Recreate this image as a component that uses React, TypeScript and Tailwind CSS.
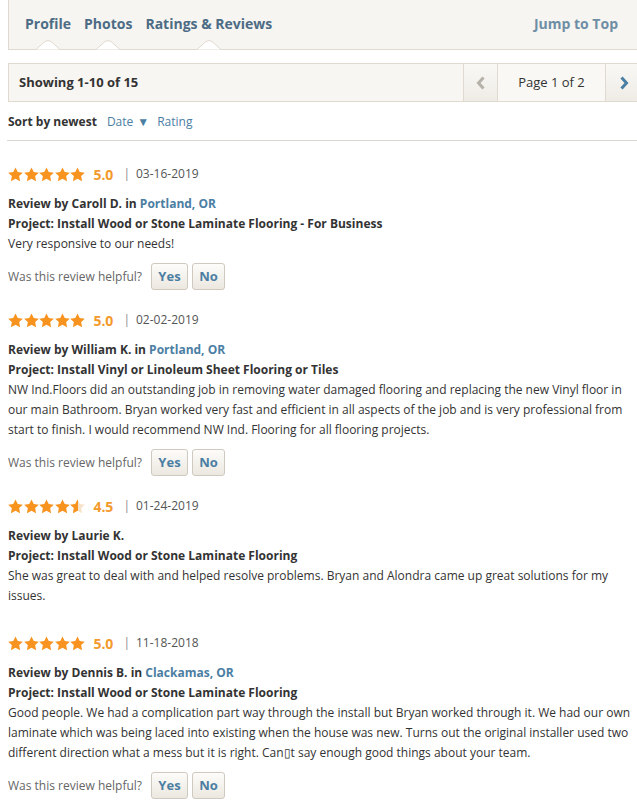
import React from 'react';

const BLUE = 'text-[#4b7ea3]';

type Review = {
  rating: number;
  date: string;
  author: string;
  location?: string;
  project: string;
  body: string[];
  helpful: boolean;
};

const reviews: Review[] = [
  {
    rating: 5,
    date: '03-16-2019',
    author: 'Caroll D.',
    location: 'Portland, OR',
    project: 'Install Wood or Stone Laminate Flooring - For Business',
    body: ['Very responsive to our needs!'],
    helpful: true,
  },
  {
    rating: 5,
    date: '02-02-2019',
    author: 'William K.',
    location: 'Portland, OR',
    project: 'Install Vinyl or Linoleum Sheet Flooring or Tiles',
    body: [
      'NW Ind.Floors did an outstanding job in removing water damaged flooring and replacing the new Vinyl floor in',
      'our main Bathroom. Bryan worked very fast and efficient in all aspects of the job and is very professional from',
      'start to finish. I would recommend NW Ind. Flooring for all flooring projects.',
    ],
    helpful: true,
  },
  {
    rating: 4.5,
    date: '01-24-2019',
    author: 'Laurie K.',
    project: 'Install Wood or Stone Laminate Flooring',
    body: [
      'She was great to deal with and helped resolve problems. Bryan and Alondra came up great solutions for my',
      'issues.',
    ],
    helpful: false,
  },
  {
    rating: 5,
    date: '11-18-2018',
    author: 'Dennis B.',
    location: 'Clackamas, OR',
    project: 'Install Wood or Stone Laminate Flooring',
    body: [
      'Good people. We had a complication part way through the install but Bryan worked through it. We had our own',
      'laminate which was being laced into existing when the house was new. Turns out the original installer used two',
      'different direction what a mess but it is right. Can\u25AFt say enough good things about your team.',
    ],
    helpful: true,
  },
];

const STAR = 'M8 0.4l2.4 4.9 5.4 0.7-3.9 3.7 1 5.4L8 12.5 3.1 15.1l1-5.4L0.2 6l5.4-0.7z';

const Star = ({ half = false, id }: { half?: boolean; id: string }) => (
  <svg width="15" height="15" viewBox="0 0 16 16">
    {half ? (
      <>
        <defs>
          <clipPath id={id}>
            <rect x="0" y="0" width="8.4" height="16" />
          </clipPath>
        </defs>
        <path d={STAR} fill="#f7e3c8" />
        <path d={STAR} fill="#f7931e" clipPath={`url(#${id})`} />
      </>
    ) : (
      <path d={STAR} fill="#f7931e" />
    )}
  </svg>
);

const Stars = ({ rating, idx }: { rating: number; idx: number }) => (
  <div className="flex gap-[0.6px]">
    {[0, 1, 2, 3, 4].map((i) => (
      <Star key={i} id={`half-${idx}-${i}`} half={rating - i > 0 && rating - i < 1} />
    ))}
  </div>
);

const Tab = ({ label }: { label: string }) => (
  <span className="relative flex items-center pb-[3px]">
    {label}
    <svg
      width="24"
      height="10"
      viewBox="0 0 24 10"
      className="absolute bottom-[-1px] left-1/2 -translate-x-1/2"
    >
      <path d="M0 9.5 L9 1.5 Q12 -0.5 15 1.5 L24 9.5" fill="#ffffff" stroke="#e0d9d0" strokeWidth="1" />
    </svg>
  </span>
);

const HelpBtn = ({ label, w }: { label: string; w: string }) => (
  <button
    className={`${w} h-[27px] rounded-[3px] border border-[#cfc9bf] bg-gradient-to-b from-[#fdfcfa] to-[#ece8e0] text-[13px] font-bold ${BLUE} flex items-center justify-center`}
  >
    {label}
  </button>
);

export default function App() {
  return (
    <div
      className="w-[637px] h-[809px] overflow-hidden bg-white text-[#333] text-[12px]"
      style={{ fontFamily: '"Open Sans", "Liberation Sans", sans-serif' }}
    >
      {/* tab bar */}
      <div className="ml-2 h-[50px] w-[640px] bg-[#f7f5f1] border-l border-b border-[#e0d9d0] flex items-stretch pl-4 pr-[30px]">
        <div className="flex items-stretch gap-[13px] text-[14px] font-bold text-[#4c6c85]">
          <Tab label="Profile" />
          <Tab label="Photos" />
          <Tab label="Ratings & Reviews" />
        </div>
        <span className="ml-auto flex items-center pb-[3px] text-[14px] font-bold text-[#6e8ea5]">Jump to Top</span>
      </div>

      {/* showing bar */}
      <div className="ml-2 mt-[13px] h-[39px] w-[650px] bg-[#f8f6f2] border border-[#e0d9d0] flex items-stretch">
        <div className="flex items-center pl-[10px] text-[13px] font-bold text-[#333]">Showing 1-10 of 15</div>
        <div className="ml-auto flex items-stretch">
          <div className="w-[34px] border-l border-[#e0d9d0] bg-gradient-to-b from-[#f9f8f5] to-[#efece6] flex items-center justify-center">
            <svg width="10" height="14" viewBox="0 0 10 14">
              <path d="M7.5 1.5 L2.5 7 L7.5 12.5" fill="none" stroke="#b5b0a8" strokeWidth="3" />
            </svg>
          </div>
          <div className="w-[109px] border-l border-r border-[#e0d9d0] bg-[#f9f8f4] flex items-center justify-center text-[13px] text-[#333]">
            Page 1 of 2
          </div>
          <div className="w-[51px] bg-gradient-to-b from-[#f9f8f5] to-[#efece6] flex items-center pl-[13px]">
            <svg width="10" height="14" viewBox="0 0 10 14">
              <path d="M2.5 1.5 L7.5 7 L2.5 12.5" fill="none" stroke="#4b7ea3" strokeWidth="3" />
            </svg>
          </div>
        </div>
      </div>

      {/* sort */}
      <div className="ml-2 mt-[10px] h-[20px] flex items-center text-[12px]">
        <span className="font-bold text-[#333]">Sort by newest</span>
        <span className={`${BLUE} ml-[10px] flex items-center gap-[4px]`}>
          Date <span className="text-[12px] leading-none">▼</span>
        </span>
        <span className={`${BLUE} ml-[8px]`}>Rating</span>
      </div>

      <div className="ml-[7px] mt-[8px] h-px bg-[#ddd6ce]" />

      {/* reviews */}
      <div className="px-2 pt-[23px] flex flex-col">
        {reviews.map((r, i) => (
          <div key={i} className={r.helpful ? 'mb-[20px]' : 'mb-[27px]'}>
            <div className="h-[20px] flex items-center">
              <Stars rating={r.rating} idx={i} />
              <span className="ml-[8px] text-[14px] font-bold text-[#f39a2c]">{r.rating.toFixed(1)}</span>
              <span className="ml-[10px] text-[#888]">|</span>
              <span className="ml-[6px] text-[#555]">{r.date}</span>
            </div>
            <div className="mt-[10px] leading-[20px]">
              <div className="font-bold">
                Review by {r.author}
                {r.location && (
                  <>
                    {' '}in <span className={BLUE}>{r.location}</span>
                  </>
                )}
              </div>
              <div className="font-bold">Project: {r.project}</div>
              {r.body.map((line, j) => (
                <div key={j} className="whitespace-nowrap">{line}</div>
              ))}
            </div>
            {r.helpful && (
              <div className="mt-[9px] flex items-center">
                <span className="text-[#666] mr-[9px]">Was this review helpful?</span>
                <HelpBtn label="Yes" w="w-[37px]" />
                <div className="w-[4px]" />
                <HelpBtn label="No" w="w-[33px]" />
              </div>
            )}
          </div>
        ))}
      </div>
    </div>
  );
}
